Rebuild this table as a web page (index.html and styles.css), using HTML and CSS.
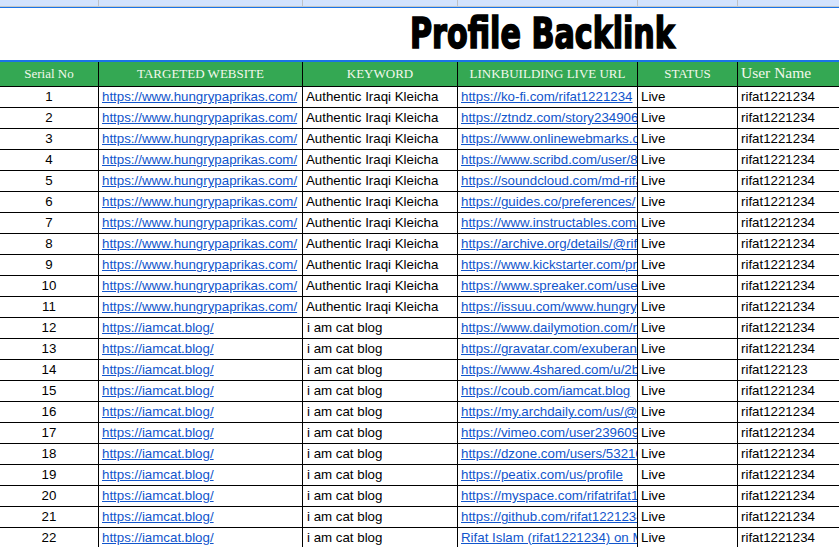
FILE: index.html
```html
<!DOCTYPE html>
<html>
<head>
<meta charset="utf-8">
<link rel="stylesheet" href="styles.css">
</head>
<body>
<div class="colstrip">
  <div class="sc c1"></div><div class="sc c2"></div><div class="sc c3"></div><div class="sc c4"></div><div class="sc c5"></div><div class="sc c6"></div>
</div>
<div class="title-row"><h1 class="title">Profile Backlink</h1></div>
<table class="sheet">
  <colgroup>
    <col class="w1"><col class="w2"><col class="w3"><col class="w4"><col class="w5"><col class="w6">
  </colgroup>
  <thead>
    <tr>
      <th>Serial No</th>
      <th>TARGETED WEBSITE</th>
      <th>KEYWORD</th>
      <th>LINKBUILDING LIVE URL</th>
      <th>STATUS</th>
      <th class="user">User Name</th>
    </tr>
  </thead>
  <tbody>
    <tr><td class="num">1</td><td><a>https://www.hungrypaprikas.com/</a></td><td>Authentic Iraqi Kleicha</td><td><a>https://ko-fi.com/rifat1221234</a></td><td>Live</td><td>rifat1221234</td></tr>
    <tr><td class="num">2</td><td><a>https://www.hungrypaprikas.com/</a></td><td>Authentic Iraqi Kleicha</td><td><a>https://ztndz.com/story23490612</a></td><td>Live</td><td>rifat1221234</td></tr>
    <tr><td class="num">3</td><td><a>https://www.hungrypaprikas.com/</a></td><td>Authentic Iraqi Kleicha</td><td><a>https://www.onlinewebmarks.com/user/</a></td><td>Live</td><td>rifat1221234</td></tr>
    <tr><td class="num">4</td><td><a>https://www.hungrypaprikas.com/</a></td><td>Authentic Iraqi Kleicha</td><td><a>https://www.scribd.com/user/8123</a></td><td>Live</td><td>rifat1221234</td></tr>
    <tr><td class="num">5</td><td><a>https://www.hungrypaprikas.com/</a></td><td>Authentic Iraqi Kleicha</td><td><a>https://soundcloud.com/md-rifat</a></td><td>Live</td><td>rifat1221234</td></tr>
    <tr><td class="num">6</td><td><a>https://www.hungrypaprikas.com/</a></td><td>Authentic Iraqi Kleicha</td><td><a>https://guides.co/preferences/</a></td><td>Live</td><td>rifat1221234</td></tr>
    <tr><td class="num">7</td><td><a>https://www.hungrypaprikas.com/</a></td><td>Authentic Iraqi Kleicha</td><td><a>https://www.instructables.com/</a></td><td>Live</td><td>rifat1221234</td></tr>
    <tr><td class="num">8</td><td><a>https://www.hungrypaprikas.com/</a></td><td>Authentic Iraqi Kleicha</td><td><a>https://archive.org/details/@rifat</a></td><td>Live</td><td>rifat1221234</td></tr>
    <tr><td class="num">9</td><td><a>https://www.hungrypaprikas.com/</a></td><td>Authentic Iraqi Kleicha</td><td><a>https://www.kickstarter.com/profile</a></td><td>Live</td><td>rifat1221234</td></tr>
    <tr><td class="num">10</td><td><a>https://www.hungrypaprikas.com/</a></td><td>Authentic Iraqi Kleicha</td><td><a>https://www.spreaker.com/user</a></td><td>Live</td><td>rifat1221234</td></tr>
    <tr><td class="num">11</td><td><a>https://www.hungrypaprikas.com/</a></td><td>Authentic Iraqi Kleicha</td><td><a>https://issuu.com/www.hungrypaprikas</a></td><td>Live</td><td>rifat1221234</td></tr>
    <tr><td class="num">12</td><td><a>https://iamcat.blog/</a></td><td class="kw">i am cat blog</td><td><a>https://www.dailymotion.com/rifat</a></td><td>Live</td><td>rifat1221234</td></tr>
    <tr><td class="num">13</td><td><a>https://iamcat.blog/</a></td><td class="kw">i am cat blog</td><td><a>https://gravatar.com/exuberantcat</a></td><td>Live</td><td>rifat1221234</td></tr>
    <tr><td class="num">14</td><td><a>https://iamcat.blog/</a></td><td class="kw">i am cat blog</td><td><a>https://www.4shared.com/u/2bXyz</a></td><td>Live</td><td>rifat122123</td></tr>
    <tr><td class="num">15</td><td><a>https://iamcat.blog/</a></td><td class="kw">i am cat blog</td><td><a>https://coub.com/iamcat.blog</a></td><td>Live</td><td>rifat1221234</td></tr>
    <tr><td class="num">16</td><td><a>https://iamcat.blog/</a></td><td class="kw">i am cat blog</td><td><a>https://my.archdaily.com/us/@rifat</a></td><td>Live</td><td>rifat1221234</td></tr>
    <tr><td class="num">17</td><td><a>https://iamcat.blog/</a></td><td class="kw">i am cat blog</td><td><a>https://vimeo.com/user239609123</a></td><td>Live</td><td>rifat1221234</td></tr>
    <tr><td class="num">18</td><td><a>https://iamcat.blog/</a></td><td class="kw">i am cat blog</td><td><a>https://dzone.com/users/5321000</a></td><td>Live</td><td>rifat1221234</td></tr>
    <tr><td class="num">19</td><td><a>https://iamcat.blog/</a></td><td class="kw">i am cat blog</td><td><a>https://peatix.com/us/profile</a></td><td>Live</td><td>rifat1221234</td></tr>
    <tr><td class="num">20</td><td><a>https://iamcat.blog/</a></td><td class="kw">i am cat blog</td><td><a>https://myspace.com/rifatrifat1221234</a></td><td>Live</td><td>rifat1221234</td></tr>
    <tr><td class="num">21</td><td><a>https://iamcat.blog/</a></td><td class="kw">i am cat blog</td><td><a>https://github.com/rifat1221234</a></td><td>Live</td><td>rifat1221234</td></tr>
    <tr><td class="num">22</td><td><a>https://iamcat.blog/</a></td><td class="kw">i am cat blog</td><td><a>Rifat Islam (rifat1221234) on Medium</a></td><td>Live</td><td>rifat1221234</td></tr>
  </tbody>
</table>
</body>
</html>
```
FILE: styles.css
```css
html, body {
  margin: 0;
  padding: 0;
  background: #ffffff;
  overflow: hidden;
  width: 839px;
  height: 547px;
}

.colstrip {
  display: flex;
  height: 6px;
  background: #d3e3fd;
  border-bottom: 1px solid #c4c7c5;
}

.sc {
  flex: none;
  height: 6px;
  box-sizing: border-box;
  border-right: 1px solid #bdc1c6;
}
.sc.c1 { width: 99px; }
.sc.c2 { width: 204px; }
.sc.c3 { width: 155px; }
.sc.c4 { width: 180px; }
.sc.c5 { width: 100px; }
.sc.c6 { width: 150px; border-right: none; }

.title-row {
  height: 52px;
  border-top: 1px solid #1a73e8;
  border-bottom: 2px solid #1a73e8;
  display: flex;
  align-items: center;
  padding-left: 410px;
  box-sizing: content-box;
}

.title {
  margin: 0;
  display: inline-block;
  font-family: "DejaVu Sans Condensed", "DejaVu Sans", sans-serif;
  font-weight: 700;
  font-size: 43px;
  line-height: 52px;
  color: #000000;
  white-space: nowrap;
  -webkit-text-stroke: 1.6px #000;
  transform: scaleX(0.78);
  transform-origin: 0 50%;
  position: relative;
  top: -1px;
}

.sheet {
  border-collapse: separate;
  border-spacing: 0;
  table-layout: fixed;
  width: 888px;
}

.w1 { width: 99px; }
.w2 { width: 204px; }
.w3 { width: 155px; }
.w4 { width: 180px; }
.w5 { width: 100px; }
.w6 { width: 150px; }

.sheet th {
  background: #34a853;
  color: #f3f8ec;
  font-family: "Liberation Serif", "DejaVu Serif", serif;
  font-weight: 400;
  font-size: 13px;
  height: 24px;
  padding: 0 3px;
  line-height: 24px;
  text-align: center;
  vertical-align: middle;
  border-right: 1px solid #000;
  border-bottom: 1px solid #000;
  white-space: nowrap;
  overflow: hidden;
  box-sizing: content-box;
}
.sheet th:last-child { border-right: none; }
.sheet th.user {
  text-align: left;
  font-size: 15.5px;
  line-height: 20px;
  vertical-align: top;
  padding-top: 1px;
  height: 23px;
}

.sheet td {
  font-family: "Liberation Sans", Arial, sans-serif;
  font-size: 13.3px;
  color: #000;
  height: 20px;
  line-height: 20px;
  padding: 0 0 0 3px;
  border-right: 1px solid #000;
  border-bottom: 1px solid #000;
  white-space: nowrap;
  overflow: hidden;
  text-overflow: clip;
  box-sizing: content-box;
}
.sheet td:last-child { border-right: none; }
.sheet td.num { text-align: center; padding: 0; }
.sheet td.kw { padding-left: 4px; }

.sheet a {
  color: #1155cc;
  text-decoration: underline;
}
```
